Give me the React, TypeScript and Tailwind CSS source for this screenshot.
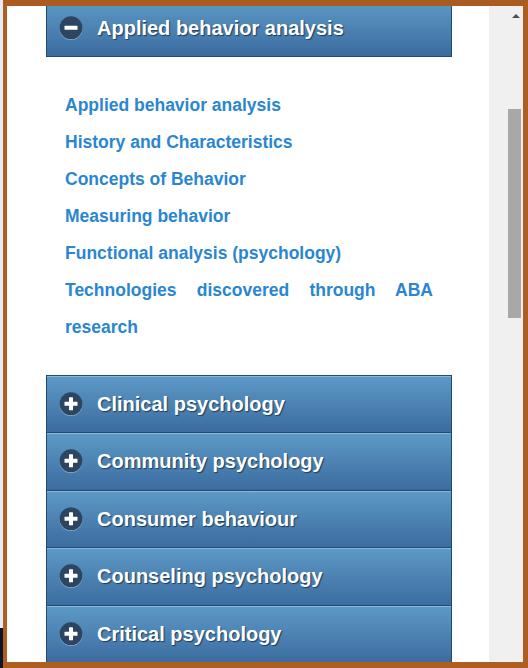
import React from 'react';

const links = [
  'Applied behavior analysis',
  'History and Characteristics',
  'Concepts of Behavior',
  'Measuring behavior',
  'Functional analysis (psychology)',
  'Technologies discovered through ABA research',
];

const closed = [
  'Clinical psychology',
  'Community psychology',
  'Consumer behaviour',
  'Counseling psychology',
  'Critical psychology',
];

const ToggleIcon: React.FC<{ open?: boolean }> = ({ open }) => (
  <svg width="24" height="24" viewBox="0 0 24 24" className="shrink-0">
    <circle cx="12" cy="12.6" r="11.5" fill="#9cbcd8" />
    <circle cx="12" cy="11.8" r="11.5" fill="#2c4661" />
    <rect x="5.5" y="9.8" width="13" height="4" rx="0.6" fill="#fff" />
    {!open && <rect x="10" y="5.3" width="4" height="13" rx="0.6" fill="#fff" />}
  </svg>
);

const Header: React.FC<{ title: string; open?: boolean }> = ({ title, open }) => (
  <div
    className={`h-[57.5px] shrink-0 flex items-center gap-[14px] pl-3 border-x border-t border-[#1d4c74] bg-gradient-to-b from-[#5d9ac6] to-[#3c6ca0] shadow-[inset_0_1px_0_#8cb6d8] ${
      open ? 'border-b shadow-[0_0_8px_rgba(70,140,210,0.55),inset_0_1px_0_#8cb6d8]' : ''
    }`}
  >
    <ToggleIcon open={open} />
    <span className="text-white font-bold text-[20px] [text-shadow:1px_1px_1px_#1b3a5c]">{title}</span>
  </div>
);

export default function App() {
  return (
    <div className="w-[528px] h-[668px] flex bg-[#10142a] overflow-hidden" style={{ fontFamily: '"Liberation Sans", Arial, sans-serif' }}>
      <div className="w-[3px] flex flex-col">
        <div className="h-[628px] bg-[#e6ecf3]" />
        <div className="flex-1 bg-[#10142a]" />
      </div>
      <div className="flex-1 flex border-t-[6px] border-b-[6px] border-l-[4px] border-r-[5px] border-[#ad5e20] border-t-[#a95b21]">
        <div className="w-[482px] bg-white overflow-hidden">
          <div className="ml-[39px] w-[406px] mt-[-7px] flex flex-col">
            <Header title="Applied behavior analysis" open />
            <div className="pt-[30px] pb-[29px] px-[19px] text-[17.5px] font-bold leading-[37px] text-[#2a86d0] text-justify">
              {links.map((l) => (
                <div key={l}>{l}</div>
              ))}
            </div>
            <div className="flex flex-col border-b border-[#1d4c74]">
              {closed.map((c) => (
                <Header key={c} title={c} />
              ))}
            </div>
          </div>
        </div>
        <div className="flex-1 bg-[#f0f0f0] flex justify-end">
          <div className="w-[15px] flex flex-col items-center">
            <div className="mt-[8px] w-0 h-0 border-l-[4px] border-r-[4px] border-b-[4px] border-l-transparent border-r-transparent border-b-[#505050]" />
            <div className="mt-[91px] w-[13px] mr-[2px] h-[209px] bg-[#a8a8a8]" />
          </div>
        </div>
      </div>
    </div>
  );
}
